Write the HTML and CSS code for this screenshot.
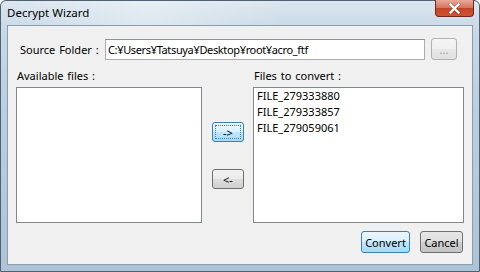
FILE: index.html
```html
<!DOCTYPE html>
<html lang="ja">
<head>
  <meta charset="UTF-8" />
  <title>Decrypt Wizard</title>
  <link rel="stylesheet" href="styles.css">
</head>
<body>

<div class="window">
  <div class="titlebar">
    <span class="title">Decrypt Wizard</span>
    <button class="close" title="Close">
      <svg width="13" height="11" viewBox="0 0 13 11">
        <path d="M2.5 1.5 L10.5 9.5 M10.5 1.5 L2.5 9.5" stroke="#5a1a10" stroke-width="3.6" stroke-linecap="square" opacity="0.35"/>
        <path d="M2.5 1.5 L10.5 9.5 M10.5 1.5 L2.5 9.5" stroke="#fff" stroke-width="2.4" stroke-linecap="square"/>
      </svg>
    </button>
  </div>

  <div class="client">
    <div class="source-row">
      <span class="source-label">Source Folder :</span>
      <div class="textbox">C:¥Users¥Tatsuya¥Desktop¥root¥acro_ftf</div>
      <button class="btn browse">...</button>
    </div>

    <div class="panes">
      <div class="pane">
        <div class="pane-label">Available files :</div>
        <div class="listbox"></div>
      </div>

      <div class="movers">
        <button class="btn move focused">-&gt;</button>
        <button class="btn move">&lt;-</button>
      </div>

      <div class="pane">
        <div class="pane-label">Files to convert :</div>
        <div class="listbox">
          <div class="item">FILE_279333880</div>
          <div class="item">FILE_279333857</div>
          <div class="item">FILE_279059061</div>
        </div>
      </div>
    </div>

    <div class="actions">
      <button class="btn convert">Convert</button>
      <button class="btn cancel">Cancel</button>
    </div>
  </div>
</div>

</body>
</html>
```

FILE: styles.css
```css
* {
  box-sizing: border-box;
}

body {
  margin: 0;
  background-color: #ffffff;
  font-family: "Noto Sans", "Noto Sans CJK JP", sans-serif;
  font-size: 11px;
  color: #000;
}

.window {
  width: 480px;
  height: 272px;
  display: flex;
  flex-direction: column;
  padding: 0 6px 6px 6px;
  border: 1px solid #4f6172;
  border-radius: 6px 6px 0 0;
  background: linear-gradient(180deg, #dbe6ef 0%, #c7d7e4 12%, #bccfe0 40%, #aec3d6 100%);
}

.titlebar {
  height: 24px;
  display: flex;
  align-items: flex-start;
  background: linear-gradient(100deg, rgba(255,255,255,0) 0%, rgba(255,255,255,0.35) 30%, rgba(255,255,255,0) 60%);
}

.title {
  font-size: 11.5px;
  line-height: 23px;
  padding-left: 0;
  color: #000;
}

.close {
  margin-left: auto;
  margin-right: -1px;
  margin-top: -1px;
  width: 39px;
  height: 17px;
  padding: 0;
  display: flex;
  align-items: center;
  justify-content: center;
  border: 1px solid #6d2a20;
  border-top: none;
  border-radius: 0 0 4px 4px;
  background: linear-gradient(180deg, #e9a99b 0%, #d8735f 48%, #c24529 52%, #d2532f 100%);
}

.client {
  flex: 1;
  background-color: #f0f0f0;
  border: 1px solid #8a9db0;
  padding: 12px 9px 0 8px;
  display: flex;
  flex-direction: column;
}

.source-row {
  display: flex;
  align-items: center;
  height: 22px;
  padding-left: 4px;
}

.source-label {
  width: 85px;
  word-spacing: 1px;
}

.textbox {
  width: 320px;
  height: 21px;
  line-height: 19px;
  padding-left: 2px;
  letter-spacing: -0.35px;
  background: #fff;
  border: 1px solid #abadb3;
  border-top-color: #8d9299;
}

.btn {
  font-family: "Noto Sans", "Noto Sans CJK JP", sans-serif;
  font-size: 11px;
  color: #000;
  padding: 0;
  border: 1px solid #707070;
  border-radius: 3px;
  background: linear-gradient(180deg, #f2f2f2 0%, #ebebeb 48%, #dddddd 52%, #cfcfcf 100%);
}

.browse {
  width: 26px;
  height: 22px;
  margin-left: 6px;
  color: #9a9a9a;
  border-color: #adb2b5;
  background: linear-gradient(180deg, #f4f4f4 0%, #f0f0f0 48%, #e6e6e6 52%, #e0e0e0 100%);
}

.panes {
  display: grid;
  grid-template-columns: 186px 32px 210px;
  column-gap: 10px;
  margin-top: 8px;
}

.pane-label {
  height: 16px;
  line-height: 16px;
  margin-bottom: 3px;
  padding-left: 1px;
  word-spacing: 1px;
}

.pane:last-child {
  margin-left: -1px;
}

.listbox {
  height: 136px;
  background: #fff;
  border: 1px solid #828790;
  padding: 0 3px;
}

.item {
  height: 16px;
  line-height: 16px;
}

.movers {
  display: flex;
  flex-direction: column;
  padding-top: 54px;
  gap: 27px;
}

.move {
  width: 32px;
  height: 20px;
}

.focused {
  border-color: #3c7fb1;
  background: linear-gradient(180deg, #eaf6fd 0%, #d9f0fc 48%, #bee6fd 52%, #a7d9f5 100%);
  outline: 1px dotted #3c7fb1;
  outline-offset: -4px;
}

.actions {
  display: flex;
  justify-content: flex-end;
  gap: 10px;
  margin-top: 8px;
}

.convert {
  width: 49px;
  height: 22px;
  border-color: #3c7fb1;
  background: linear-gradient(180deg, #eaf6fd 0%, #d9f0fc 48%, #bee6fd 52%, #a7d9f5 100%);
}

.cancel {
  width: 43px;
  height: 22px;
  background: linear-gradient(180deg, #e6e6e6 0%, #dedede 48%, #cfcfcf 52%, #c4c4c4 100%);
}
```
